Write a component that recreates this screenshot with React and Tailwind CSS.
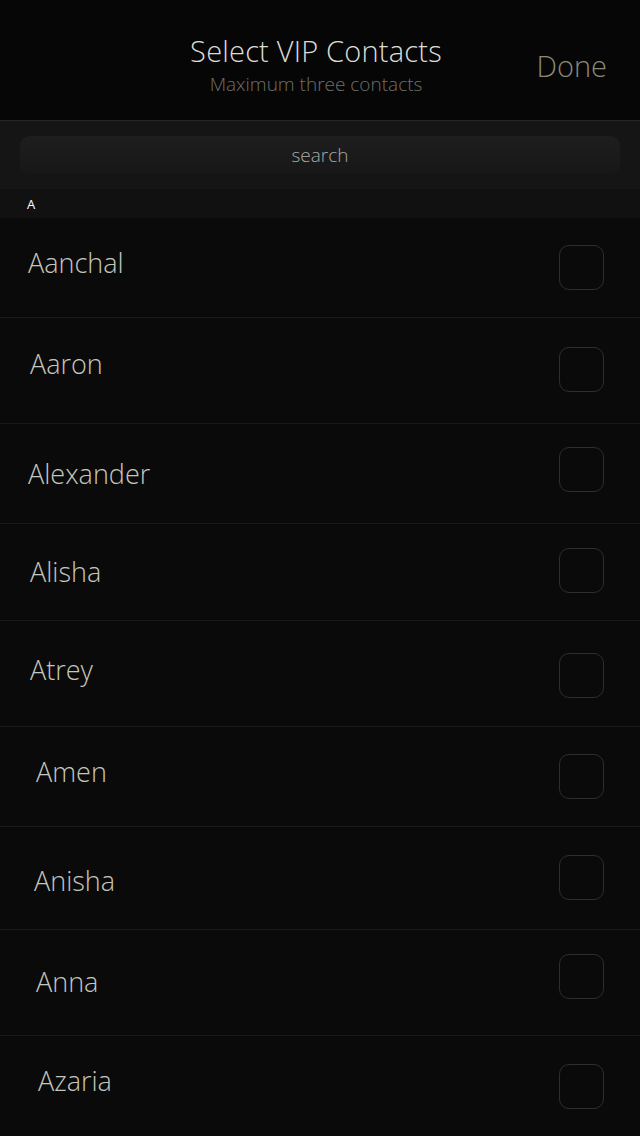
import React from "react";

const contacts = [
  { name: "Aanchal", row: "h-[100px]", text: "pl-[28px] mb-[8px]", box: "" },
  { name: "Aaron", row: "h-[106px]", text: "pl-[30px] mb-[12px]", box: "mb-[2px]" },
  { name: "Alexander", row: "h-[100px]", text: "pl-[28px] mt-[2px]", box: "mb-[8px]" },
  { name: "Alisha", row: "h-[97px]", text: "pl-[30px]", box: "mb-[4px]" },
  { name: "Atrey", row: "h-[106px]", text: "pl-[30px] mb-[6px]", box: "mt-[4px]" },
  { name: "Amen", row: "h-[100px]", text: "pl-[36px] mb-[8px]", box: "" },
  { name: "Anisha", row: "h-[103px]", text: "pl-[34px] mt-[6px]", box: "mb-[2px]" },
  { name: "Anna", row: "h-[106px]", text: "pl-[36px]", box: "mb-[12px]" },
  { name: "Azaria", row: "h-[101px]", text: "pl-[38px] mt-[-10px]", box: "" },
];

export default function App() {
  return (
    <div
      className="w-[640px] h-[1136px] overflow-hidden bg-[#0a0a0a] flex flex-col"
      style={{ fontFamily: '"Open Sans", "Noto Sans", sans-serif' }}
    >
      {/* HEADER */}
      <div className="h-[121px] shrink-0 bg-[#060606] border-b border-[#262626] flex items-center relative">
        <div className="flex-1 flex flex-col items-center pt-[8px] pr-[8px]">
          <div className="text-[29px] leading-[34px] text-[#dcdcd6] font-light tracking-[0.2px]">
            Select VIP Contacts
          </div>
          <div className="text-[19px] leading-[22px] text-[#6f6f6a] font-light mt-[5px]">
            Maximum three contacts
          </div>
        </div>
        <div className="absolute right-[33px] top-[47px] text-[29px] leading-[38px] text-[#8a8978] font-light">
          Done
        </div>
      </div>

      {/* SEARCH */}
      <div className="h-[68px] shrink-0 bg-[#151515] px-[20px] pt-[15px]">
        <div className="h-[38px] rounded-[10px] bg-gradient-to-b from-[#1e1e1e] to-[#171717] flex items-center justify-center">
          <span className="text-[19px] text-[#a9a9a4] font-light">search</span>
        </div>
      </div>

      {/* SECTION */}
      <div className="h-[29px] shrink-0 bg-[#111111] flex items-center pl-[27px] pt-[2px]">
        <span className="text-[13px] text-white">A</span>
      </div>

      {/* LIST */}
      <div className="flex flex-col">
        {contacts.map((c, i) => (
          <div
            key={c.name}
            className={`${c.row} shrink-0 flex items-center justify-between pr-[36px] ${
              i < contacts.length - 1 ? "border-b border-[#1a1a1a]" : ""
            }`}
          >
            <span className={`${c.text} text-[27px] text-[#c6c6be] font-light`}>{c.name}</span>
            <div
              className={`${c.box} w-[45px] h-[45px] rounded-[10px] border-[1.5px] border-[#2e2e2e]`}
            />
          </div>
        ))}
      </div>
    </div>
  );
}
